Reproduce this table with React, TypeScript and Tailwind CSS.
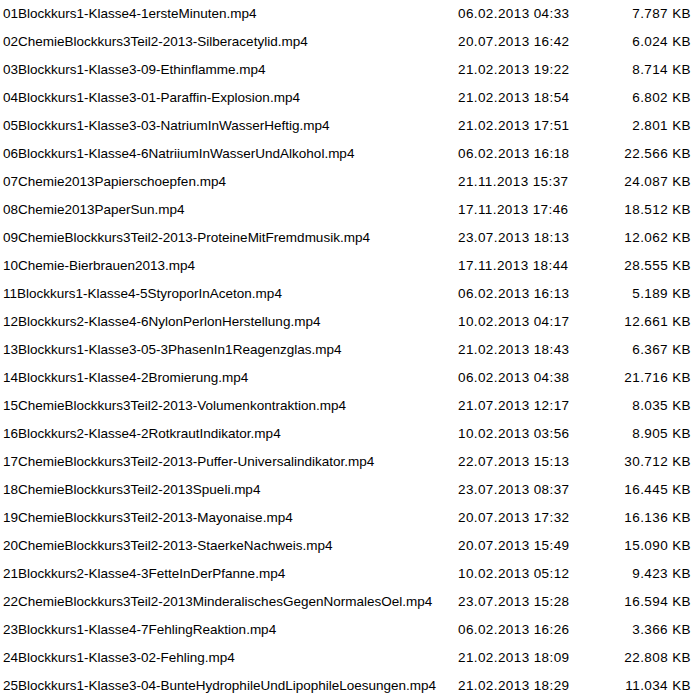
const files: [string, string, string][] = [
  ["01Blockkurs1-Klasse4-1ersteMinuten.mp4", "06.02.2013 04:33", "7.787 KB"],
  ["02ChemieBlockkurs3Teil2-2013-Silberacetylid.mp4", "20.07.2013 16:42", "6.024 KB"],
  ["03Blockkurs1-Klasse3-09-Ethinflamme.mp4", "21.02.2013 19:22", "8.714 KB"],
  ["04Blockkurs1-Klasse3-01-Paraffin-Explosion.mp4", "21.02.2013 18:54", "6.802 KB"],
  ["05Blockkurs1-Klasse3-03-NatriumInWasserHeftig.mp4", "21.02.2013 17:51", "2.801 KB"],
  ["06Blockkurs1-Klasse4-6NatriiumInWasserUndAlkohol.mp4", "06.02.2013 16:18", "22.566 KB"],
  ["07Chemie2013Papierschoepfen.mp4", "21.11.2013 15:37", "24.087 KB"],
  ["08Chemie2013PaperSun.mp4", "17.11.2013 17:46", "18.512 KB"],
  ["09ChemieBlockkurs3Teil2-2013-ProteineMitFremdmusik.mp4", "23.07.2013 18:13", "12.062 KB"],
  ["10Chemie-Bierbrauen2013.mp4", "17.11.2013 18:44", "28.555 KB"],
  ["11Blockkurs1-Klasse4-5StyroporInAceton.mp4", "06.02.2013 16:13", "5.189 KB"],
  ["12Blockkurs2-Klasse4-6NylonPerlonHerstellung.mp4", "10.02.2013 04:17", "12.661 KB"],
  ["13Blockkurs1-Klasse3-05-3PhasenIn1Reagenzglas.mp4", "21.02.2013 18:43", "6.367 KB"],
  ["14Blockkurs1-Klasse4-2Bromierung.mp4", "06.02.2013 04:38", "21.716 KB"],
  ["15ChemieBlockkurs3Teil2-2013-Volumenkontraktion.mp4", "21.07.2013 12:17", "8.035 KB"],
  ["16Blockkurs2-Klasse4-2RotkrautIndikator.mp4", "10.02.2013 03:56", "8.905 KB"],
  ["17ChemieBlockkurs3Teil2-2013-Puffer-Universalindikator.mp4", "22.07.2013 15:13", "30.712 KB"],
  ["18ChemieBlockkurs3Teil2-2013Spueli.mp4", "23.07.2013 08:37", "16.445 KB"],
  ["19ChemieBlockkurs3Teil2-2013-Mayonaise.mp4", "20.07.2013 17:32", "16.136 KB"],
  ["20ChemieBlockkurs3Teil2-2013-StaerkeNachweis.mp4", "20.07.2013 15:49", "15.090 KB"],
  ["21Blockkurs2-Klasse4-3FetteInDerPfanne.mp4", "10.02.2013 05:12", "9.423 KB"],
  ["22ChemieBlockkurs3Teil2-2013MinderalischesGegenNormalesOel.mp4", "23.07.2013 15:28", "16.594 KB"],
  ["23Blockkurs1-Klasse4-7FehlingReaktion.mp4", "06.02.2013 16:26", "3.366 KB"],
  ["24Blockkurs1-Klasse3-02-Fehling.mp4", "21.02.2013 18:09", "22.808 KB"],
  ["25Blockkurs1-Klasse3-04-BunteHydrophileUndLipophileLoesungen.mp4", "21.02.2013 18:29", "11.034 KB"],
];

export default function App() {
  return (
    <div className="w-[696px] h-[698px] bg-white text-black text-[13.5px] font-['Liberation_Sans',Arial,sans-serif]">
      {files.map(([name, date, size]) => (
        <div key={name} className="flex h-7 items-center">
          <div className="w-[458px] pl-[3px] whitespace-nowrap">{name}</div>
          <div className="w-[125px] whitespace-nowrap tracking-[0.4px]">{date}</div>
          <div className="w-[108px] text-right whitespace-nowrap tracking-[0.4px]">{size}</div>
        </div>
      ))}
    </div>
  );
}
